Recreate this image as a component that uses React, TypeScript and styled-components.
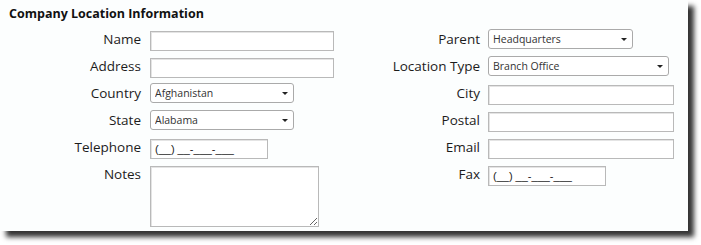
import * as React from 'react';
import styled, { createGlobalStyle } from 'styled-components';

const GlobalStyle = createGlobalStyle`
  html, body {
    margin: 0;
    background: #fff;
    font-family: "Open Sans", "Noto Sans", sans-serif;
  }
`

const Page = styled.main`
  width: 701px;
  height: 245px;
  overflow: hidden;
`

const Panel = styled.section`
  width: 688px;
  height: 231px;
  box-sizing: border-box;
  background: #fcfefe;
  box-shadow: 6px 6px 5px rgba(0, 0, 0, 0.8);
`

const Title = styled.h2`
  margin: 0;
  padding: 5px 9px 0;
  height: 24px;
  box-sizing: border-box;
  font-size: 12.5px;
  line-height: 18px;
  font-weight: 700;
  color: #111;
`

const Columns = styled.div`
  display: grid;
  grid-template-columns: 350px 1fr;
  align-items: start;
  margin-top: 5px;
`

const Column = styled.div<{ $labelWidth: number; $gap: number }>`
  display: grid;
  grid-template-columns: ${p => p.$labelWidth}px 1fr;
  column-gap: ${p => p.$gap}px;
  grid-auto-rows: minmax(27px, auto);
  align-content: start;
  align-items: start;
`

const Label = styled.label`
  text-align: right;
  font-size: 13.5px;
  line-height: 21px;
  color: #1c1c1c;
  white-space: nowrap;
`

const TextInput = styled.input<{ $width: number }>`
  display: block;
  width: ${p => p.$width}px;
  height: 20px;
  margin: 2px 0 0;
  padding: 0 4px;
  box-sizing: border-box;
  border: 1px solid #b9b9b9;
  box-shadow: inset 1px 1px 0 #e4e4e4;
  background: #fff;
  font-family: "Liberation Sans", Arial, sans-serif;
  font-size: 11px;
  line-height: 18px;
  color: #222;
  outline: none;
`

const Notes = styled.textarea`
  display: block;
  width: 169px;
  height: 61px;
  margin: 2px 0 0;
  box-sizing: border-box;
  border: 1px solid #b9b9b9;
  box-shadow: inset 1px 1px 0 #e4e4e4;
  background: #fff;
  resize: both;
  outline: none;
`

const SelectWrap = styled.div<{ $width: number }>`
  position: relative;
  width: ${p => p.$width}px;

  &::after {
    content: '';
    position: absolute;
    right: 6px;
    top: 9px;
    border-left: 3px solid transparent;
    border-right: 3px solid transparent;
    border-top: 3px solid #222;
    pointer-events: none;
  }
`

const Select = styled.select`
  appearance: none;
  display: block;
  width: 100%;
  height: 20px;
  margin: 0;
  padding: 0 4px;
  box-sizing: border-box;
  border: 1px solid #aaa;
  border-radius: 3px;
  background: #fff;
  font-family: "Open Sans", "Noto Sans", sans-serif;
  font-size: 10.5px;
  color: #333;
  outline: none;
`

const PHONE_MASK = '(__) __-___-___'

function Dropdown({ width, options }: { width: number; options: string[] }) {
  return (
    <SelectWrap $width={width}>
      <Select defaultValue={options[0]}>
        {options.map(o => <option key={o}>{o}</option>)}
      </Select>
    </SelectWrap>
  )
}

export default function App() {
  return (
    <Page>
      <GlobalStyle />
      <Panel>
        <Title>Company Location Information</Title>
        <Columns>
          <Column $labelWidth={141} $gap={9}>
            <Label>Name</Label>
            <TextInput $width={184} />
            <Label>Address</Label>
            <TextInput $width={184} />
            <Label>Country</Label>
            <Dropdown width={144} options={['Afghanistan', 'Albania', 'Algeria']} />
            <Label>State</Label>
            <Dropdown width={144} options={['Alabama', 'Alaska', 'Arizona']} />
            <Label>Telephone</Label>
            <TextInput $width={118} defaultValue={PHONE_MASK} />
            <Label>Notes</Label>
            <Notes />
          </Column>
          <Column $labelWidth={130} $gap={8}>
            <Label>Parent</Label>
            <Dropdown width={145} options={['Headquarters']} />
            <Label>Location Type</Label>
            <Dropdown width={181} options={['Branch Office', 'Warehouse', 'Store']} />
            <Label>City</Label>
            <TextInput $width={186} />
            <Label>Postal</Label>
            <TextInput $width={186} />
            <Label>Email</Label>
            <TextInput $width={186} />
            <Label>Fax</Label>
            <TextInput $width={118} defaultValue={PHONE_MASK} />
          </Column>
        </Columns>
      </Panel>
    </Page>
  )
}
